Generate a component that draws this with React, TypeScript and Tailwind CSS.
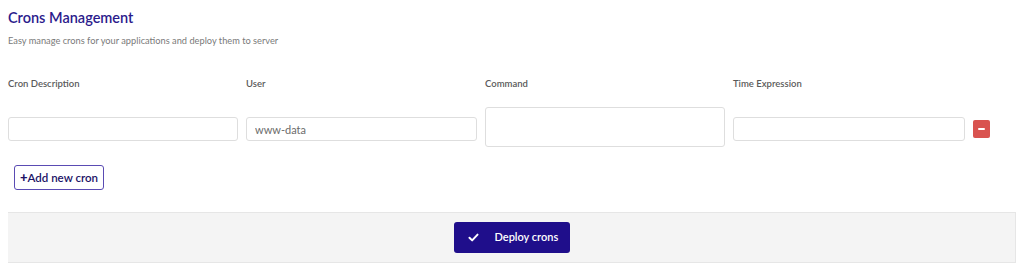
import React from 'react';

const columns = [
  { label: 'Cron Description', placeholder: '', tall: false },
  { label: 'User', placeholder: 'www-data', tall: false },
  { label: 'Command', placeholder: '', tall: true },
  { label: 'Time Expression', placeholder: '', tall: false },
];

const App: React.FC = () => {
  return (
    <div className="w-[1024px] h-[268px] bg-white px-2 pt-[8px] font-['Lato',sans-serif]">
      {/* Header */}
      <h1 className="text-[14.5px] leading-5 font-semibold text-[#2b1b8c]">Crons Management</h1>
      <p className="mt-[7px] text-[9.25px] leading-3 text-[#7a7a7a]">
        Easy manage crons for your applications and deploy them to server
      </p>

      {/* Cron rows */}
      <div className="mt-[31px] grid grid-cols-[230px_231px_240px_232px_17px] gap-x-2">
        {columns.map((c) => (
          <div key={c.label} className="text-[9.5px] leading-3 font-semibold text-[#5a5a5a]">
            {c.label}
          </div>
        ))}
        <div />
      </div>
      <div className="mt-[17px] grid grid-cols-[230px_231px_240px_232px_17px] gap-x-2 items-center">
        {columns.map((c) =>
          c.tall ? (
            <textarea
              key={c.label}
              className="h-10 resize-none rounded-[3px] border border-[#dedede] px-2 text-[11px] outline-none"
            />
          ) : (
            <input
              key={c.label}
              placeholder={c.placeholder}
              className="mt-1 h-6 rounded-[3px] border border-[#dedede] px-2 text-[11px] text-[#555] placeholder:text-[#6b6b6b] outline-none"
            />
          )
        )}
        <button className="mt-1 flex h-[18px] w-[17px] items-center justify-center rounded-[2px] bg-[#d9534f]">
          <span className="h-[2px] w-[7px] rounded-full bg-white" />
        </button>
      </div>

      {/* Add new */}
      <button className="ml-[6px] mt-[18px] flex h-[25px] w-[90px] items-center justify-center rounded-[3px] border border-[#5a4bb3] text-[11.5px] font-semibold text-[#1c1366]">
        <span className="text-[13px] font-black leading-none">+</span>Add new cron
      </button>

      {/* Footer */}
      <div className="mt-[22px] flex h-[51px] items-center justify-center border-y border-r border-[#e6e6e6] bg-[#f4f4f4]">
        <button className="flex h-[31px] w-[116px] items-center rounded-[3px] bg-[#1f0e8b] pl-[14px] text-[11px] font-semibold text-white">
          <svg width="11" height="9" viewBox="0 0 12 10" fill="none" className="mr-[16px]">
            <path d="M1.5 5.2 4.5 8.2 10.5 1.8" stroke="white" strokeWidth="2.2" strokeLinecap="round" strokeLinejoin="round" />
          </svg>
          Deploy crons
        </button>
      </div>
    </div>
  );
};

export default App;
